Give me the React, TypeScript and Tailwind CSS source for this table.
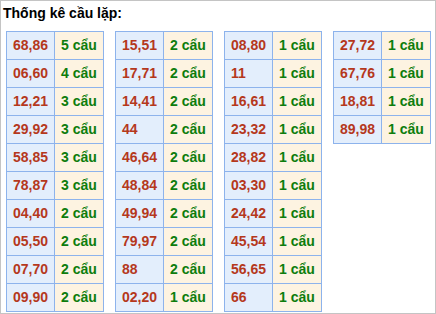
import React from "react";

const tables: [string, string][][] = [
  [
    ["68,86", "5"], ["06,60", "4"], ["12,21", "3"], ["29,92", "3"], ["58,85", "3"],
    ["78,87", "3"], ["04,40", "2"], ["05,50", "2"], ["07,70", "2"], ["09,90", "2"],
  ],
  [
    ["15,51", "2"], ["17,71", "2"], ["14,41", "2"], ["44", "2"], ["46,64", "2"],
    ["48,84", "2"], ["49,94", "2"], ["79,97", "2"], ["88", "2"], ["02,20", "1"],
  ],
  [
    ["08,80", "1"], ["11", "1"], ["16,61", "1"], ["23,32", "1"], ["28,82", "1"],
    ["03,30", "1"], ["24,42", "1"], ["45,54", "1"], ["56,65", "1"], ["66", "1"],
  ],
  [["27,72", "1"], ["67,76", "1"], ["18,81", "1"], ["89,98", "1"]],
];

export default function App() {
  return (
    <div
      className="w-[436px] h-[314px] border border-[#c4c4c4] bg-white overflow-hidden"
      style={{ fontFamily: '"Liberation Sans", Arial, sans-serif' }}
    >
      <div className="pl-[2px] pt-[4px] text-[14px] leading-[16px] font-bold text-black">
        Thống kê cầu lặp:
      </div>
      <div className="flex items-start gap-[11px] pl-[5px] mt-[10px]">
        {tables.map((rows, ti) => (
          <div
            key={ti}
            className="grid grid-cols-[47px_48px] gap-px bg-[#8db3ec] border border-[#8db3ec]"
          >
            {rows.map(([num, cnt], ri) => (
              <React.Fragment key={ri}>
                <div className="h-[27px] bg-[#e3eefc] pl-[6px] flex items-center text-[14px] font-bold text-[#b5381c]">
                  {num}
                </div>
                <div className="h-[27px] bg-[#fdf3e1] pl-[6px] flex items-center text-[14px] font-bold text-[#0d7d0d]">
                  {cnt} cẩu
                </div>
              </React.Fragment>
            ))}
          </div>
        ))}
      </div>
    </div>
  );
}
